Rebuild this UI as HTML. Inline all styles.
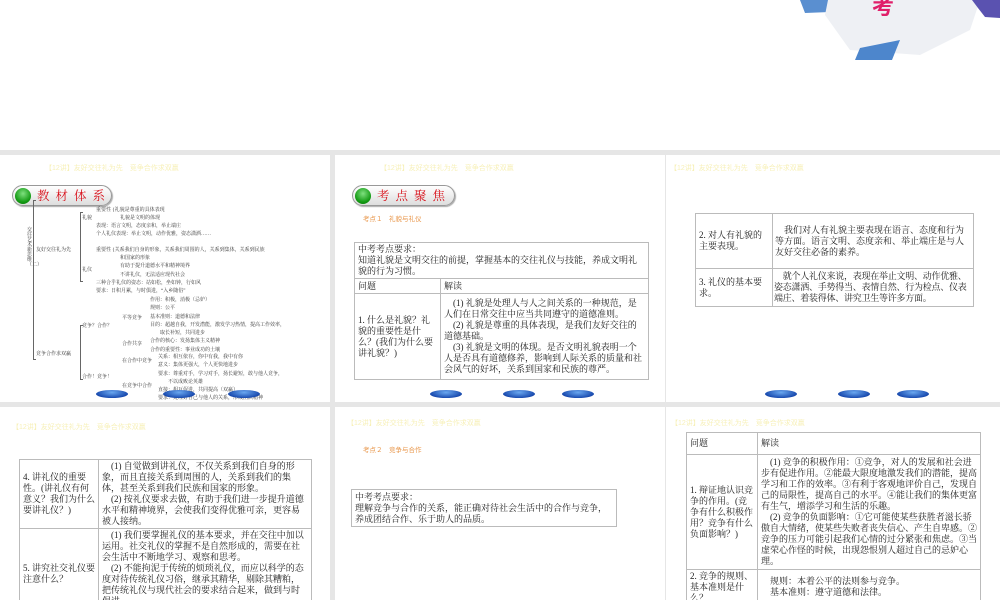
<!DOCTYPE html>
<html><head><meta charset="utf-8"><style>
*{margin:0;padding:0;box-sizing:border-box}
body{width:1000px;height:600px;position:relative;overflow:hidden;background:#fff;font-family:"Liberation Serif","Noto Serif CJK SC",serif;color:#222}
.g{position:absolute;background:#e6e6e6}
.s{position:absolute;background:#fff;overflow:hidden}
.a{position:absolute}
.t{position:absolute;font-size:7px;color:#f7f0b8;font-family:"Liberation Sans","Noto Sans CJK SC",sans-serif;white-space:nowrap}
.btn{position:absolute;width:32px;height:8px;border-radius:50%;background:radial-gradient(ellipse at 50% 30%,#6aa8f0,#1a4cb0 70%,#0a2a80);}
.pill{position:absolute;height:21px;border-radius:11px;border:1px solid #999;background:linear-gradient(#fff,#ddd);box-shadow:1px 1px 1px #aaa}
.pill .c{position:absolute;left:2px;top:2px;width:16px;height:16px;border-radius:50%;background:radial-gradient(circle at 50% 35%,#7fe07f,#139a13 65%,#0a6a0a)}
.pill span{position:absolute;left:24px;top:2px;font-size:12.5px;color:#d8101a;letter-spacing:6px;font-family:"Liberation Sans","Noto Serif CJK SC",serif;line-height:16px;white-space:nowrap}
table{position:absolute;border-collapse:collapse;font-size:9px;line-height:11px}
td{border:1px solid #bbb;padding:1px 3px;vertical-align:middle}
.o{position:absolute;font-size:6.5px;color:#e8964a;font-family:"Liberation Sans","Noto Sans CJK SC",sans-serif;white-space:nowrap}
.m{position:absolute;font-size:5px;line-height:8.3px;color:#333;white-space:nowrap}
.br{position:absolute;border-left:1px solid #666;border-top:1px solid #666;border-bottom:1px solid #666;width:3px}
</style></head><body>
<svg class="a" style="left:800px;top:0" width="200" height="60">
<polygon points="0,0 35,0 30,12 5,13" fill="#5a8fd0"/>
<polygon points="28,0 180,0 170,30 120,55 50,50 25,15" fill="#eef0f4"/>
<polygon points="60,48 100,40 92,60 55,60" fill="#4d86cc"/>
<polygon points="172,0 200,0 200,18 185,17 178,8" fill="#5a52b0"/>
<text x="72" y="14" font-size="22" fill="#e0206a" font-family="Noto Sans CJK SC,sans-serif" font-weight="bold">考</text>
</svg>
<div class="g" style="left:0;top:150px;width:1000px;height:450px"></div>

<div class="s" style="left:0;top:155px;width:330px;height:247px">
<div class="t" style="left:45px;top:8px">【12讲】友好交往礼为先　竞争合作求双赢</div>
<div class="pill" style="left:12px;top:30px;width:100px"><div class="c"></div><span>教材体系</span></div>
<div class="m" style="left:27px;top:73px;width:6px;line-height:5px;white-space:normal">交往艺术新思维（二）</div>
<div class="br" style="left:33px;top:45px;height:160px"></div>
<div class="m" style="left:36px;top:92px">友好交往礼为先</div>
<div class="m" style="left:36px;top:196px">竞争合作求双赢</div>
<div class="br" style="left:80px;top:57px;height:70px"></div>
<div class="m" style="left:82px;top:60px">礼貌</div>
<div class="m" style="left:82px;top:112px">礼仪</div>
<div class="m" style="left:96px;top:52px">重要性 {礼貌是尊重的具体表现</div>
<div class="m" style="left:120px;top:60px">礼貌是文明的体现</div>
<div class="m" style="left:96px;top:68px">表现：语言文明，态度亲和，举止端庄</div>
<div class="m" style="left:96px;top:76px">个人礼仪表现：举止文明，动作优雅，姿态潇洒……</div>
<div class="m" style="left:96px;top:92px">重要性 {关系我们自身的形象，关系我们周围的人，关系到集体，关系到民族</div>
<div class="m" style="left:120px;top:100px">和国家的形象</div>
<div class="m" style="left:120px;top:108px">有助于提升道德水平和精神境界</div>
<div class="m" style="left:120px;top:117px">不讲礼仪，无法适应现代社会</div>
<div class="m" style="left:96px;top:125px">三种合乎礼仪的姿态：站如松，坐如钟，行如风</div>
<div class="m" style="left:96px;top:133px">要求：日积月累，与时俱进，“入乡随俗”</div>
<div class="br" style="left:80px;top:170px;height:55px"></div>
<div class="m" style="left:82px;top:168px">竞争？合作？</div>
<div class="m" style="left:82px;top:219px">合作！竞争！</div>
<div class="m" style="left:122px;top:160px">平等竞争</div>
<div class="m" style="left:122px;top:186px">合作共享</div>
<div class="m" style="left:122px;top:203px">在合作中竞争</div>
<div class="m" style="left:122px;top:228px">在竞争中合作</div>
<div class="m" style="left:150px;top:142px">作用：积极，消极（忌妒）<br>规则：公平<br>基本准则：道德和法律<br>目的：超越自我，开发潜能，激发学习热情，提高工作效率，<br>　　取长补短，共同进步<br>合作的核心：发扬集体主义精神<br>合作的重要性：事业成功的土壤</div>
<div class="m" style="left:158px;top:199px">关系：相互依存，你中有我，我中有你<br>意义：集体更强大，个人更快地进步<br>要求：尊重对手，学习对手，扬长避短，敢与他人竞争，<br>　　不以成败论英雄<br>直接：相互促进，共同提高（双赢）<br>要求：处理好自己与他人的关系，形成团队精神</div>
<div class="btn" style="left:96px;top:235px"></div><div class="btn" style="left:163px;top:235px"></div><div class="btn" style="left:228px;top:235px"></div>
</div>

<div class="s" style="left:335px;top:155px;width:330px;height:247px">
<div class="t" style="left:45px;top:8px">【12讲】友好交往礼为先　竞争合作求双赢</div>
<div class="pill" style="left:17px;top:30px;width:103px"><div class="c"></div><span>考点聚焦</span></div>
<div class="o" style="left:28px;top:58px">考点１　礼貌与礼仪</div>
<table style="left:19px;top:87px;width:295px">
<tr><td colspan="2" style="height:36px;vertical-align:top">中考考点要求：<br>知道礼貌是文明交往的前提，掌握基本的交往礼仪与技能，养成文明礼貌的行为习惯。</td></tr>
<tr><td style="width:86px;height:15px">问题</td><td>解读</td></tr>
<tr><td style="height:86px">1. 什么是礼貌？礼貌的重要性是什么？(我们为什么要讲礼貌？)</td><td>　(1) 礼貌是处理人与人之间关系的一种规范，是人们在日常交往中应当共同遵守的道德准则。<br>　(2) 礼貌是尊重的具体表现，是我们友好交往的道德基础。<br>　(3) 礼貌是文明的体现。是否文明礼貌表明一个人是否具有道德修养，影响到人际关系的质量和社会风气的好坏，关系到国家和民族的尊严。</td></tr>
</table>
<div class="btn" style="left:95px;top:235px"></div><div class="btn" style="left:168px;top:235px"></div><div class="btn" style="left:227px;top:235px"></div>
</div>

<div class="s" style="left:666px;top:155px;width:334px;height:247px">
<div class="t" style="left:4px;top:8px">【12讲】友好交往礼为先　竞争合作求双赢</div>
<table style="left:29px;top:58px;width:279px">
<tr><td style="width:77px;height:55px">2. 对人有礼貌的主要表现。</td><td style="padding:1px 2px">　我们对人有礼貌主要表现在语言、态度和行为等方面。语言文明、态度亲和、举止端庄是与人友好交往必备的素养。</td></tr>
<tr><td style="height:38px">3. 礼仪的基本要求。</td><td style="letter-spacing:-0.25px;padding:1px 1px">　就个人礼仪来说，表现在举止文明、动作优雅、姿态潇洒、手势得当、表情自然、行为检点、仪表端庄、着装得体、讲究卫生等许多方面。</td></tr>
</table>
<div class="btn" style="left:99px;top:235px"></div><div class="btn" style="left:172px;top:235px"></div><div class="btn" style="left:231px;top:235px"></div>
</div>

<div class="s" style="left:0;top:407px;width:330px;height:193px">
<div class="t" style="left:12px;top:15px">【12讲】友好交往礼为先　竞争合作求双赢</div>
<table style="left:19px;top:52px;width:293px">
<tr><td style="width:79px;height:69px">4. 讲礼仪的重要性。(讲礼仪有何意义？我们为什么要讲礼仪？)</td><td>　(1) 自觉做到讲礼仪，不仅关系到我们自身的形象，而且直接关系到周围的人，关系到我们的集体，甚至关系到我们民族和国家的形象。<br>　(2) 按礼仪要求去做，有助于我们进一步提升道德水平和精神境界，会使我们变得优雅可亲，更容易被人接纳。</td></tr>
<tr><td style="height:90px">5. 讲究社交礼仪要注意什么？</td><td style="vertical-align:top">　(1) 我们要掌握礼仪的基本要求，并在交往中加以运用。社交礼仪的掌握不是自然形成的，需要在社会生活中不断地学习、观察和思考。<br>　(2) 不能拘泥于传统的烦琐礼仪，而应以科学的态度对待传统礼仪习俗，继承其精华，剔除其糟粕，把传统礼仪与现代社会的要求结合起来，做到与时俱进。</td></tr>
</table>
</div>

<div class="s" style="left:335px;top:407px;width:330px;height:193px">
<div class="t" style="left:12px;top:11px">【12讲】友好交往礼为先　竞争合作求双赢</div>
<div class="o" style="left:28px;top:37px">考点２　竞争与合作</div>
<table style="left:16px;top:82px;width:266px">
<tr><td style="height:37px">中考考点要求：<br>理解竞争与合作的关系，能正确对待社会生活中的合作与竞争，养成团结合作、乐于助人的品质。</td></tr>
</table>
</div>

<div class="s" style="left:666px;top:407px;width:334px;height:193px">
<div class="t" style="left:5px;top:11px">【12讲】友好交往礼为先　竞争合作求双赢</div>
<table style="left:20px;top:25px;width:295px">
<tr><td style="width:71px;height:22px">问题</td><td>解读</td></tr>
<tr><td style="height:115px">1. 辩证地认识竞争的作用。(竞争有什么积极作用？竞争有什么负面影响？)</td><td>　(1) 竞争的积极作用：①竞争，对人的发展和社会进步有促进作用。②能最大限度地激发我们的潜能，提高学习和工作的效率。③有利于客观地评价自己，发现自己的局限性，提高自己的水平。④能让我们的集体更富有生气，增添学习和生活的乐趣。<br>　(2) 竞争的负面影响：①它可能使某些获胜者滋长骄傲自大情绪，使某些失败者丧失信心、产生自卑感。②竞争的压力可能引起我们心情的过分紧张和焦虑。③当虚荣心作怪的时候，出现怨恨别人超过自己的忌妒心理。</td></tr>
<tr><td style="height:40px;vertical-align:top">2. 竞争的规则、基本准则是什么？</td><td style="vertical-align:top;padding-top:6px">　规则：本着公平的法则参与竞争。<br>　基本准则：遵守道德和法律。</td></tr>
</table>
</div>
</body></html>
